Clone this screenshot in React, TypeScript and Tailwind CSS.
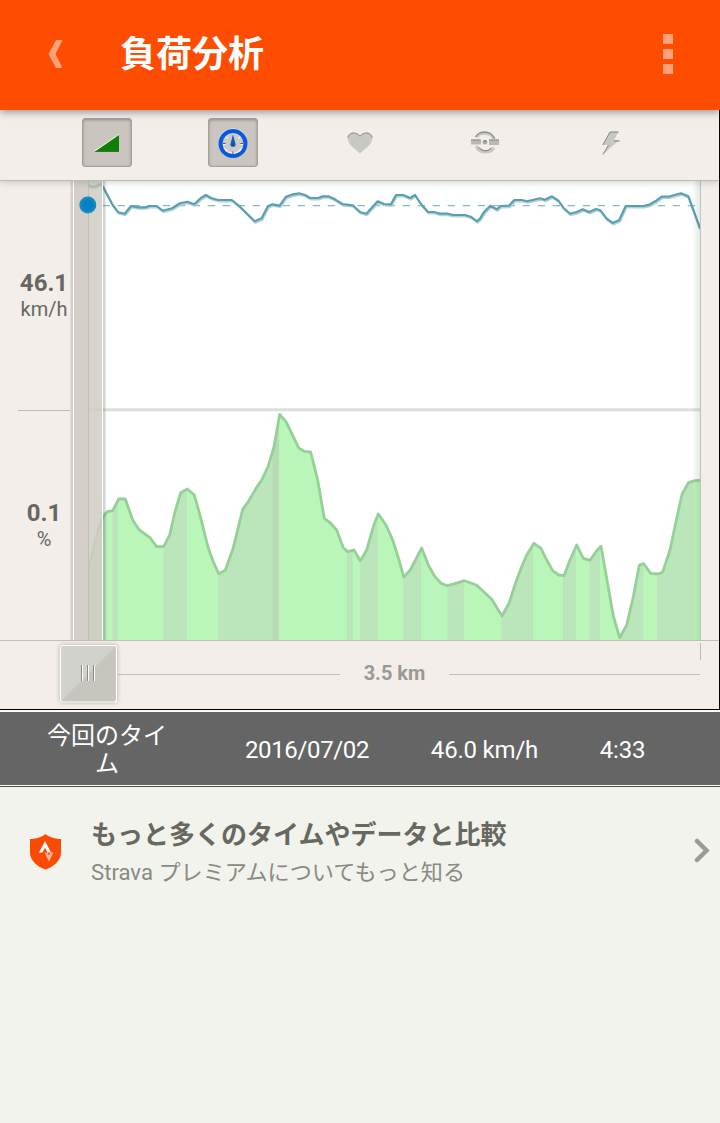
import { ReactNode } from 'react';

const ELEVATION =
  '88,569 89.3,565 93.3,549 98,530 103.3,516.7 107.3,511.7 112.7,510.7 118.7,499 125.3,499 132.7,520 139.3,530 150,537.7 156.7,546.7 163.7,546.7 169.7,535 175,511.7 180.7,492.7 187.3,489 194.3,495 200,515 208.3,548.3 213.3,561.7 218.7,573.7 225.3,570.3 233.3,547.7 242.7,509.3 248.3,501.7 256,488.3 261.7,480 268.3,466 274,446.7 279.7,414.3 286,421.7 291.7,433.3 299,448.3 304.3,451.3 310.7,452 317.7,480 324.3,518.3 330,522.7 336.7,530 343.3,547.7 347.7,551.7 354,550 360.3,561 366.7,550 374,524.3 378.3,514 386,525 392.7,540 399.3,560.7 403.7,577 410.3,570 416,559 421.7,548 428.3,565 435,576.7 441,583.3 447.3,585.7 455,583.7 464.3,580.7 471.7,583.3 476.7,585.3 480,588.3 491.7,599.3 502,616 509,603.3 516,581.7 521.7,566.7 526.7,555 534,543.3 541,548.3 546.7,560 552.7,570.7 558.7,575 564,575.7 570,560 576.7,545 583.3,558.3 590,560.3 596.7,550.7 601,546.3 606.7,578.3 613.3,616 619.7,637.7 626.7,625 633.3,596.7 639.3,565 643.7,563.7 650.7,573.3 658.3,574 662.7,572 670,550 676,521.7 682,494.3 688.7,482.3 695,480.7 700,480.3';

const SPEED =
  '88.3,185 90.7,186.7 95,186.7 100.7,184 103.3,187.3 107.3,195 112.7,205 118.3,212.3 124.7,213.7 131,206 138.3,207.3 145.7,207.3 149.3,206 156.7,206 162.7,210.7 172,208.3 180,203.3 187.3,201.7 194.3,204.3 200,198.7 205.7,195 211.7,198.3 218.3,200 231.7,200 240,206.7 254.7,221.3 261.7,218.3 268,206 272.7,204.3 279.7,205.7 286,196.7 291.7,194.7 299,193.3 305,195 310,198 318.3,198 322.7,196.3 328.3,196.3 335,199.3 342.3,204 352.7,205.3 360,212 366.3,213.7 377.7,201.3 384,204 391,204.3 396,195 403.3,195 410.3,198 415,195 421,204 428,212 434.3,212 440,213.7 447.3,213.7 453.3,215 465,215 470.7,216.7 477,221.3 480,218.7 484.3,211.7 490.3,205.7 496.7,209.3 500.7,206 509,205.7 514.3,200 521.7,200 527,201.3 540,198.3 545,199.7 552,196.3 558.7,201 563.3,207.7 570,213.7 576.7,212 582.7,209.3 589.3,212 596,209 600.3,210.3 606.7,218.7 612.7,223 619.3,220 625.7,206 643.3,206 649.3,204.7 655.3,201.3 661.7,196.7 670,196.3 681,193.3 688.3,196.3 693.3,210 700,228.7';

// uphill stretches, [from, to]
const CLIMBS = [
  [88, 107], [112.3, 117.7], [163.5, 187], [218, 279], [347, 353], [360.3, 378], [403.5, 421],
  [447.3, 464], [501.5, 533], [563, 576], [589.5, 600], [619.7, 643.5], [657, 693.5],
];

function ToolButton({ active, children }: { active?: boolean; children: ReactNode }) {
  return (
    <div className="flex w-[126px] justify-center">
      <button
        className={
          active
            ? 'flex h-[49px] w-[50px] items-center justify-center rounded-[3px] border border-[#a5a09b] bg-[#cac5bf] shadow-[inset_0_1px_3px_rgba(0,0,0,0.3)]'
            : 'flex h-[49px] w-[50px] items-center justify-center'
        }
      >
        {children}
      </button>
    </div>
  );
}

function Header() {
  return (
    <header className="relative z-20 flex h-[110px] items-center bg-[#fe4c00] pr-[47px] pl-[48px] shadow-[0_2px_8px_rgba(0,0,0,0.4)]">
      <svg className="-mt-[2px]" width="15" height="28" viewBox="0 0 15 28">
        <path d="M8 0h6.500L7.500 14l7 14H8L0.500 14z" fill="#ffa078" />
      </svg>
      <h1 className="ml-[57px] text-[36px] leading-[50px] font-bold text-white">負荷分析</h1>
      <div className="-mt-[2px] ml-auto flex flex-col gap-[5px]">
        <span className="h-[10px] w-[10px] bg-[#ffa27c]" />
        <span className="h-[10px] w-[10px] bg-[#ffa27c]" />
        <span className="h-[10px] w-[10px] bg-[#ffa27c]" />
      </div>
    </header>
  );
}

function Toolbar() {
  return (
    <div className="relative z-10 flex h-[71px] border-b border-[#bdbbb7] bg-[#f4eeeb] pt-2 pl-[44px] shadow-[0_2px_6px_rgba(70,90,70,0.22)]">
      <ToolButton active>
        <svg width="26" height="19" viewBox="0 0 26 19">
          <path d="M0 18L25 1v1L3 18z" fill="#f4f4ec" />
          <path d="M1 18.500L25 2v16.500z" fill="#0d7f07" />
          <path d="M1 18.500h24" stroke="#385c35" strokeWidth="0.800" />
        </svg>
      </ToolButton>
      <ToolButton active>
        <svg className="mt-px" width="30" height="31" viewBox="0 0 30 31">
          <circle cx="15" cy="14.800" r="12.600" fill="none" stroke="#f3f1ef" strokeWidth="3.600" />
          <circle cx="15" cy="15.500" r="12.500" fill="#cdcac8" stroke="#0759e0" strokeWidth="4" />
          <path d="M6 19.500a10 10 0 0 0 18 0" fill="none" stroke="#f4f4f4" strokeWidth="1.200" />
          <g stroke="#f6f6f6" strokeWidth="1.200">
            <path d="M5 16.500h2.500M22.500 16.500h2.500M16 23.500v2.500M9 21.500l-1.500 1.500M21 21.500l1.500 1.500M8 9l1.500 1.500M22 9l-1.500 1.500" />
          </g>
          <path d="M5 15.500h2.500M22.500 15.500h2.500M15 23.500v2.500" stroke="#555" />
          <path d="M15 6.500l2.600 9.700a2.600 2.600 0 1 1-5.200 0z" fill="#1459c4" />
          <circle cx="15" cy="17" r="1.300" fill="#254c86" />
        </svg>
      </ToolButton>
      <ToolButton>
        <svg className="ml-px" width="26" height="24" viewBox="0 0 26 24">
          <path d="M13 22.500C8 18 .8 13.500.8 7.500.8 1.200 9.500-.2 13 5 16.500-.2 25.200 1.200 25.200 7.500c0 6-7.200 10.500-12.200 15z" fill="#c8c8c5" />
          <path d="M.9 7C1.200 1.200 9.500.2 13 5.300 16.500.2 24.800 1.200 25.100 7" fill="none" stroke="#8d8b87" />
        </svg>
      </ToolButton>
      <ToolButton>
        <svg width="28" height="23" viewBox="0 0 28 23">
          <g fill="none" stroke="#c6c8c5" strokeWidth="3.500">
            <path d="M5.500 6.500C8.500.5 20 .2 23 8M22.500 16.500C19.500 22.500 8.500 22.500 5.500 15" />
          </g>
          <path d="M0 8.500h10v5H0zM18 8.500h10v5.500H18z" fill="#b9bab7" />
          <path d="M4.500 6C8-.8 20-.8 23.500 7.500" fill="none" stroke="#777974" />
          <path d="M8 16.500c3.500 4.500 9.500 4 12 .5" fill="none" stroke="#777974" />
          <path d="M0 9h9.500M18 9h10" stroke="#8b8c89" />
          <circle cx="14" cy="11.200" r="2.300" fill="#aaa" />
          <path d="M12 10.500q2-1.800 4 0" fill="none" stroke="#777" />
        </svg>
      </ToolButton>
      <ToolButton>
        <svg width="18" height="24" viewBox="0 0 18 24">
          <path d="M8 1h8.500L12 9h5L1 23.500 6.500 14H.8z" fill="#c6c8c5" />
          <path d="M8 1h8.500M8 1L.8 14M12 10h5.500M6.500 14L1 23.500" fill="none" stroke="#85837f" />
        </svg>
      </ToolButton>
    </div>
  );
}

function Readout({ value, unit }: { value: string; unit: string }) {
  return (
    <div className="-mt-[2px] w-[88px] shrink-0 text-center text-[#666762]">
      <p className="text-[24px] leading-[28px] font-bold">{value}</p>
      <p className="text-[20px] leading-[24px]">{unit}</p>
    </div>
  );
}

function Chart() {
  return (
    <div className="relative flex h-[459px]">
      <div className="w-[70px] shrink-0">
        <div className="ml-[18px] flex h-[230px] items-center border-b border-[#bcbab7]">
          <div className="-ml-[18px]">
            <Readout value="46.1" unit="km/h" />
          </div>
        </div>
        <div className="flex h-[229px] items-center">
          <Readout value="0.1" unit="%" />
        </div>
      </div>
      <svg className="shrink-0" width="631" height="459" viewBox="70 181 631 459">
        <defs>
          <clipPath id="area">
            <polygon points={`${ELEVATION} 700,640 88,640`} />
          </clipPath>
          <linearGradient id="edge">
            <stop offset="0" stopColor="#65806a" stopOpacity="0" />
            <stop offset="1" stopColor="#65806a" stopOpacity="0.180" />
          </linearGradient>
        </defs>
        <rect x="88" y="181" width="613" height="459" fill="#fff" />
        <rect x="88" y="408.300" width="613" height="3" fill="#dbe0dc" />
        <g clipPath="url(#area)">
          <rect x="88" y="400" width="613" height="240" fill="#baf6b9" />
          {CLIMBS.map(([from, to]) => (
            <rect key={from} x={from} y="400" width={to - from} height="240" fill="#bbe6bb" />
          ))}
          <rect x="272.500" y="400" width="6.500" height="240" fill="#b5dcb5" />
        </g>
        <polyline points={ELEVATION} fill="none" stroke="#95d197" strokeWidth="2.800" strokeLinejoin="round" />
        <path d="M88 205.700H700" stroke="#88b8c7" strokeWidth="1.300" strokeDasharray="7.300 7.700" strokeDashoffset="0.300" />
        <polyline points={SPEED} fill="none" stroke="#b9cfd3" strokeWidth="2" transform="translate(0.8 1.500)" />
        <polyline points={SPEED} fill="none" stroke="#56a0b4" strokeWidth="2.200" strokeLinejoin="round" />
        <rect x="692" y="181" width="8" height="459" fill="url(#edge)" />
        <path d="M700.500 181v459" stroke="#c2c5c1" />
        {/* selected range */}
        <rect x="70.500" y="181" width="3" height="459" fill="#d3d0cc" />
        <rect x="103" y="181" width="2.500" height="459" fill="#5d715f" fillOpacity="0.300" />
        <rect x="74" y="181" width="14.500" height="459" fill="#d4d0c9" />
        <rect x="88.500" y="181" width="14" height="459" fill="#cfccc2" fillOpacity="0.850" />
        <polyline points="88.3,185 90.7,186.7 95,186.7 100.7,184 102,185.5" fill="none" stroke="#b3bbb5" strokeWidth="2" />
        <path d="M88.500 181v459" stroke="#bfc0b8" />
        <path d="M73.500 181v459M102.500 181v459" stroke="#fff" />
        <circle cx="87.800" cy="205" r="8.500" fill="#168ac3" />
        <circle cx="87.800" cy="205" r="6" fill="#0483c3" />
      </svg>
    </div>
  );
}

function Scrubber() {
  return (
    <div className="relative flex h-[69px] border-t border-[#c1bfbb] pt-[3px] pl-[59px]">
      <svg className="z-10 shrink-0 drop-shadow-[0_0_2px_rgba(0,0,0,0.3)]" width="59" height="59" viewBox="0 0 59 59">
        <rect x="1.500" y="1.500" width="56" height="56.500" rx="2" fill="#c8c5bf" />
        <path d="M2 57L57 2H2z" fill="#d1d2cb" />
        <rect x="1.500" y="1.500" width="56" height="56.500" rx="2" fill="none" stroke="#fff" strokeWidth="1.200" />
        <path d="M22.500 21v16M28.500 21v16M34.500 21v16" stroke="#8c8b85" />
        <path d="M23.500 21v16M29.500 21v16M35.500 21v16" stroke="#fff" />
      </svg>
      <div className="mt-[30px] h-px w-[222px] bg-[#c1bfbb]" />
      <span className="mt-[15px] w-[109px] text-center text-[20px] leading-[28px] font-bold text-[#999a94]">3.5 km</span>
      <div className="mt-[30px] h-px w-[251px] bg-[#c1bfbb]" />
      <span className="absolute top-[2px] left-[700px] h-[17px] w-px bg-[#b8b9b7]" />
    </div>
  );
}

function EffortRow() {
  return (
    <div className="flex h-[73px] items-center bg-[#656565] pt-[2px] text-[24px] leading-[28px] text-white">
      <div className="ml-[44px] w-[126px] text-center">今回のタイム</div>
      <div className="ml-[48px] w-[178px] text-center tracking-[-0.35px]">2016/07/02</div>
      <div className="w-[177px] text-center tracking-[-0.2px]">46.0 km/h</div>
      <div className="w-[99px] text-center tracking-[-0.2px]">4:33</div>
    </div>
  );
}

function PremiumRow() {
  return (
    <div className="flex items-center pt-[29px] pr-[10px] pl-[29px]">
      <svg className="-mt-[5px] shrink-0" width="33" height="37" viewBox="0 0 33 37">
        <path d="M16.500 1C13.500 3.800 7 6 1 6v14c0 7.500 8 14 15.500 16.500C24 34 32 27.500 32 20V6C26 6 19.500 3.800 16.500 1z" fill="#fb4b02" />
        <path d="M10 19.500L16 8l6 11.500h-3.500L16 14.500l-2.500 5z" fill="#fff" />
        <path d="M15.500 19.500h3l1.500 3 1.500-3h3L20 28.500z" fill="#ffb494" />
      </svg>
      <div className="ml-[29px]">
        <h2 className="text-[26px] leading-[38px] font-bold text-[#666861]">もっと多くのタイムやデータと比較</h2>
        <p className="text-[22.15px] leading-[37px] text-[#888a83]">Strava プレミアムについてもっと知る</p>
      </div>
      <svg className="-mt-[6px] ml-auto" width="16" height="25" viewBox="0 0 16 25">
        <path d="M3 3l9.500 9.500L3 22" fill="none" stroke="#999b97" strokeWidth="4.500" strokeLinecap="round" />
      </svg>
    </div>
  );
}

export default function App() {
  return (
    <div className="h-[1123px] w-[720px] overflow-hidden bg-[#f2f3ec] font-['Roboto','Noto_Sans_CJK_JP',sans-serif]">
      <Header />
      <main className="border-r border-b border-black bg-[#f4eeeb]">
        <Toolbar />
        <Chart />
        <Scrubber />
      </main>
      <div className="border-b border-[#4d4d4d]">
        <div className="border-t-2 border-b border-[#fafafa]">
          <EffortRow />
        </div>
      </div>
      <PremiumRow />
    </div>
  );
}
